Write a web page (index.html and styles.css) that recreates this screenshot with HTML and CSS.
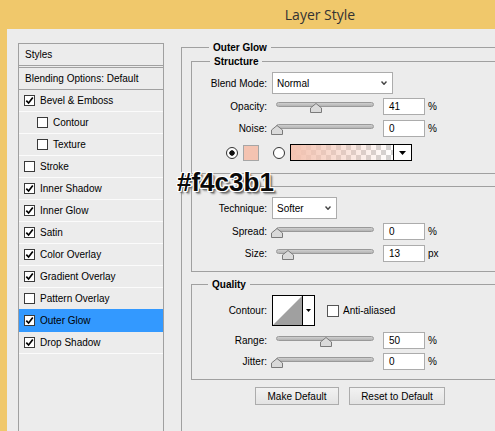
FILE: index.html
```html
<!DOCTYPE html>
<html lang="en">
<head>
<meta charset="utf-8">
<title>Layer Style</title>
<link rel="stylesheet" href="styles.css">
</head>
<body>
<div class="window">
  <div class="titlebar"><span>Layer Style</span></div>
  <div class="client">
    <div class="styles-list">
      <div class="list-head">Styles</div>
      <div class="list-blend">Blending Options: Default</div>
      <div class="item"><span class="cb"><svg viewBox="0 0 9 9"><path d="M1.3 4.6 L3.6 7 L7.8 1.6"/></svg></span>Bevel &amp; Emboss</div>
      <div class="item sub"><span class="cb"></span>Contour</div>
      <div class="item sub"><span class="cb"></span>Texture</div>
      <div class="item"><span class="cb"></span>Stroke</div>
      <div class="item"><span class="cb"><svg viewBox="0 0 9 9"><path d="M1.3 4.6 L3.6 7 L7.8 1.6"/></svg></span>Inner Shadow</div>
      <div class="item"><span class="cb"><svg viewBox="0 0 9 9"><path d="M1.3 4.6 L3.6 7 L7.8 1.6"/></svg></span>Inner Glow</div>
      <div class="item"><span class="cb"><svg viewBox="0 0 9 9"><path d="M1.3 4.6 L3.6 7 L7.8 1.6"/></svg></span>Satin</div>
      <div class="item"><span class="cb"><svg viewBox="0 0 9 9"><path d="M1.3 4.6 L3.6 7 L7.8 1.6"/></svg></span>Color Overlay</div>
      <div class="item"><span class="cb"><svg viewBox="0 0 9 9"><path d="M1.3 4.6 L3.6 7 L7.8 1.6"/></svg></span>Gradient Overlay</div>
      <div class="item"><span class="cb"></span>Pattern Overlay</div>
      <div class="item selected"><span class="cb"><svg viewBox="0 0 9 9"><path d="M1.3 4.6 L3.6 7 L7.8 1.6"/></svg></span>Outer Glow</div>
      <div class="item"><span class="cb"><svg viewBox="0 0 9 9"><path d="M1.3 4.6 L3.6 7 L7.8 1.6"/></svg></span>Drop Shadow</div>
    </div>

    <div class="panel">
      <div class="group outer">
        <div class="legend">Outer Glow</div>

        <div class="group inner structure">
          <div class="legend">Structure</div>
          <div class="row row-select">
            <span class="lbl">Blend Mode:</span>
            <div class="select select-blend"><span>Normal</span><svg class="chev" viewBox="0 0 6 4"><polyline points="0.5,0.5 3,3.3 5.5,0.5"/></svg></div>
          </div>
          <div class="row row-slider first">
            <span class="lbl">Opacity:</span>
            <div class="slider"><div class="track"></div><svg class="thumb" style="left:34px" viewBox="0 0 12 10"><polygon points="6,0.5 11.5,5 11.5,9.5 0.5,9.5 0.5,5"/></svg></div>
            <div class="num">41</div><span class="unit">%</span>
          </div>
          <div class="row row-slider">
            <span class="lbl">Noise:</span>
            <div class="slider"><div class="track"></div><svg class="thumb" style="left:-5px" viewBox="0 0 12 10"><polygon points="6,0.5 11.5,5 11.5,9.5 0.5,9.5 0.5,5"/></svg></div>
            <div class="num">0</div><span class="unit">%</span>
          </div>
          <div class="row color-row">
            <span class="radio on"></span>
            <span class="swatch"></span>
            <span class="radio second"></span>
            <div class="gradient"><span class="grad-fill"></span><span class="grad-drop"><svg viewBox="0 0 7 4"><polygon points="0,0 7,0 3.5,4"/></svg></span></div>
          </div>
        </div>

        <div class="group inner elements">
          <div class="legend blank">Elements</div>
          <div class="row row-select">
            <span class="lbl">Technique:</span>
            <div class="select select-tech"><span>Softer</span><svg class="chev" viewBox="0 0 6 4"><polyline points="0.5,0.5 3,3.3 5.5,0.5"/></svg></div>
          </div>
          <div class="row row-slider first">
            <span class="lbl">Spread:</span>
            <div class="slider"><div class="track"></div><svg class="thumb" style="left:-5px" viewBox="0 0 12 10"><polygon points="6,0.5 11.5,5 11.5,9.5 0.5,9.5 0.5,5"/></svg></div>
            <div class="num">0</div><span class="unit">%</span>
          </div>
          <div class="row row-slider">
            <span class="lbl">Size:</span>
            <div class="slider"><div class="track"></div><svg class="thumb" style="left:6px" viewBox="0 0 12 10"><polygon points="6,0.5 11.5,5 11.5,9.5 0.5,9.5 0.5,5"/></svg></div>
            <div class="num">13</div><span class="unit">px</span>
          </div>
        </div>

        <div class="group inner quality">
          <div class="legend">Quality</div>
          <div class="row contour-row">
            <span class="lbl">Contour:</span>
            <div class="contour">
              <svg class="curve" viewBox="0 0 30 30"><polygon points="0,30 30,0 30,30"/></svg>
              <span class="contour-drop"><svg viewBox="0 0 5 3"><polygon points="0,0 5,0 2.5,3"/></svg></span>
            </div>
            <span class="cb plain"></span><span class="aa">Anti-aliased</span>
          </div>
          <div class="row row-slider range">
            <span class="lbl">Range:</span>
            <div class="slider"><div class="track"></div><svg class="thumb" style="left:44px" viewBox="0 0 12 10"><polygon points="6,0.5 11.5,5 11.5,9.5 0.5,9.5 0.5,5"/></svg></div>
            <div class="num">50</div><span class="unit">%</span>
          </div>
          <div class="row row-slider first">
            <span class="lbl">Jitter:</span>
            <div class="slider"><div class="track"></div><svg class="thumb" style="left:-5px" viewBox="0 0 12 10"><polygon points="6,0.5 11.5,5 11.5,9.5 0.5,9.5 0.5,5"/></svg></div>
            <div class="num">0</div><span class="unit">%</span>
          </div>
        </div>

        <div class="buttons">
          <div class="btn btn-make">Make Default</div>
          <div class="btn btn-reset">Reset to Default</div>
        </div>
      </div>
    </div>
  </div>
  <div class="callout">#f4c3b1</div>
</div>
</body>
</html>
```

FILE: styles.css
```css
* { box-sizing: border-box; }

html, body {
  margin: 0;
  padding: 0;
  overflow: hidden;
}

body {
  width: 495px;
  height: 431px;
  background: #f0c86b;
  font-family: "Liberation Sans", Arial, sans-serif;
  font-size: 10px;
  color: #000;
}

.window {
  position: relative;
  width: 495px;
  height: 431px;
  display: flex;
  flex-direction: column;
}

.titlebar {
  height: 29px;
  flex: none;
  display: flex;
  justify-content: center;
  align-items: center;
  padding-left: 145px;
  font-family: "Open Sans", "Noto Sans", sans-serif;
  font-size: 14px;
  line-height: 29px;
  color: #333;
}

.client {
  flex: 1;
  margin-left: 7px;
  background: #ececec;
  display: flex;
  align-items: flex-start;
  padding: 14px 0 0 11px;
  overflow: hidden;
}

/* ---------- left styles list ---------- */
.styles-list {
  width: 146px;
  height: 420px;
  flex: none;
  border: 1px solid #a0a0a0;
}

.list-head {
  height: 22px;
  line-height: 21px;
  padding-left: 6px;
  border-bottom: 1px solid #a0a0a0;
}

.list-blend {
  margin-top: 1px;
  height: 23px;
  line-height: 21px;
  padding-left: 6px;
  border-top: 1px solid #a0a0a0;
  border-bottom: 1px solid #a0a0a0;
}

.item {
  height: 22px;
  display: flex;
  align-items: center;
  padding-left: 5px;
  border-bottom: 1px solid #fbfbfb;
}

.item.sub { padding-left: 18px; }

.item.selected {
  background: #3399ff;
  border-bottom-color: #3399ff;
  box-shadow: 0 -1px 0 #3399ff;
}

.cb {
  width: 11px;
  height: 11px;
  flex: none;
  margin-right: 5px;
  border: 1px solid #3a3a3a;
  background: #fff;
  display: flex;
  align-items: center;
  justify-content: center;
}

.cb svg {
  width: 9px;
  height: 9px;
  fill: none;
  stroke: #000;
  stroke-width: 1.7;
}

/* ---------- right panel ---------- */
.panel {
  flex: none;
  width: 330px;
  margin: 4px 0 0 17px;
}

.group {
  border: 1px solid #a0a0a0;
  border-right: none;
}

.outer {
  border-bottom: none;
  padding: 0 0 40px 9px;
}

.legend {
  display: table;
  height: 13px;
  margin: -7px 0 0 18px;
  padding: 0 4px;
  background: #ececec;
  font-weight: bold;
  line-height: 13px;
}

.legend.blank { visibility: hidden; }

.quality .legend { margin-left: 16px; }

.structure { margin-top: 7px; padding-bottom: 12px; }
.elements  { margin-top: 12px; padding-bottom: 9px; }
.quality   { margin-top: 12px; padding-bottom: 9px; }

.row {
  display: flex;
  align-items: center;
}

.lbl {
  width: 75px;
  flex: none;
  margin-right: 5px;
  text-align: right;
}

.row-select { height: 22px; margin-top: 4px; }

.select {
  height: 22px;
  border: 1px solid #acacac;
  background: #fff;
  display: flex;
  align-items: center;
  justify-content: space-between;
  padding: 0 5px 0 4px;
}

.select-blend { width: 121px; }
.select-tech  { width: 65px; }

.chev {
  width: 6px;
  height: 4px;
  fill: none;
  stroke: #444;
  stroke-width: 1.4;
}

.row-slider { height: 17px; margin-top: 5px; }
.row-slider.first { margin-top: 4px; }
.row-slider.range { margin-top: 6px; }

.slider {
  position: relative;
  width: 98px;
  height: 17px;
  margin-left: 4px;
  flex: none;
  padding-top: 4px;
}

.track {
  height: 5px;
  border: 1px solid #999;
  border-radius: 3px;
  background: linear-gradient(#cfcfcf, #b4b4b4);
}

.thumb {
  position: absolute;
  top: 5px;
  width: 12px;
  height: 10px;
  fill: #dadada;
  stroke: #7a7a7a;
  stroke-width: 1;
}

.num {
  width: 42px;
  height: 17px;
  flex: none;
  margin-left: 9px;
  padding-left: 5px;
  border: 1px solid #acacac;
  background: #fff;
  line-height: 15px;
}

.unit { margin-left: 3px; }

/* color row */
.color-row {
  height: 17px;
  margin-top: 7px;
  padding-left: 34px;
}

.radio {
  width: 12px;
  height: 12px;
  flex: none;
  border: 1px solid #333;
  border-radius: 50%;
  background: #fff;
}

.radio.on {
  background: radial-gradient(circle, #111 0, #111 2.4px, #fff 3px);
}

.radio.second { margin-left: 14px; }

.swatch {
  width: 16px;
  height: 16px;
  flex: none;
  margin-left: 5px;
  border: 1px solid #a6a6a6;
  background: #f4c3b1;
}

.gradient {
  width: 122px;
  height: 17px;
  flex: none;
  margin-left: 5px;
  border: 1px solid #000;
  display: flex;
}

.grad-fill {
  flex: 1;
  background:
    linear-gradient(to right, #f4c3b1 0%, rgba(244, 195, 177, 0.55) 45%, rgba(244, 195, 177, 0) 100%),
    repeating-conic-gradient(#d2d2d2 0 25%, #ffffff 0 50%) 0 0 / 10px 10px;
  border-right: 1px solid #000;
}

.grad-drop {
  width: 17px;
  display: flex;
  align-items: center;
  justify-content: center;
  background: #fff;
}

.grad-drop svg {
  width: 7px;
  height: 4px;
  fill: #000;
}

/* quality */
.contour-row {
  height: 31px;
  margin-top: 4px;
}

.contour {
  width: 43px;
  height: 31px;
  flex: none;
  border: 1px solid #000;
  background: #fff;
  display: flex;
}

.curve {
  width: 30px;
  height: 29px;
  fill: #a0a0a0;
  border-right: 1px solid #000;
}

.contour-drop {
  flex: 1;
  display: flex;
  align-items: center;
  justify-content: center;
}

.contour-drop svg {
  width: 5px;
  height: 3px;
  fill: #000;
}

.cb.plain {
  width: 12px;
  height: 12px;
  margin: 0 4px 0 12px;
  border-color: #555;
}

/* buttons */
.buttons {
  display: flex;
  gap: 10px;
  margin: 7px 0 0 64px;
}

.btn {
  height: 18px;
  border: 1px solid #acacac;
  background: linear-gradient(#f2f2f2, #e3e3e3);
  display: flex;
  align-items: center;
  justify-content: center;
}

.btn-make  { width: 84px; }
.btn-reset { width: 96px; }

/* annotation */
.callout {
  position: absolute;
  left: 177px;
  top: 169px;
  font-family: "Liberation Sans", Arial, sans-serif;
  font-weight: bold;
  font-size: 26px;
  line-height: 26px;
  color: #0a0a0a;
  text-shadow:
    1px 0 0 #fff, -1px 0 0 #fff, 0 1px 0 #fff, 0 -1px 0 #fff,
    1px 1px 0 #fff, -1px -1px 0 #fff, 1px -1px 0 #fff, -1px 1px 0 #fff,
    2px 2px 1px #6a6a6a, 3px 3px 2px #8a8a8a;
}
```
